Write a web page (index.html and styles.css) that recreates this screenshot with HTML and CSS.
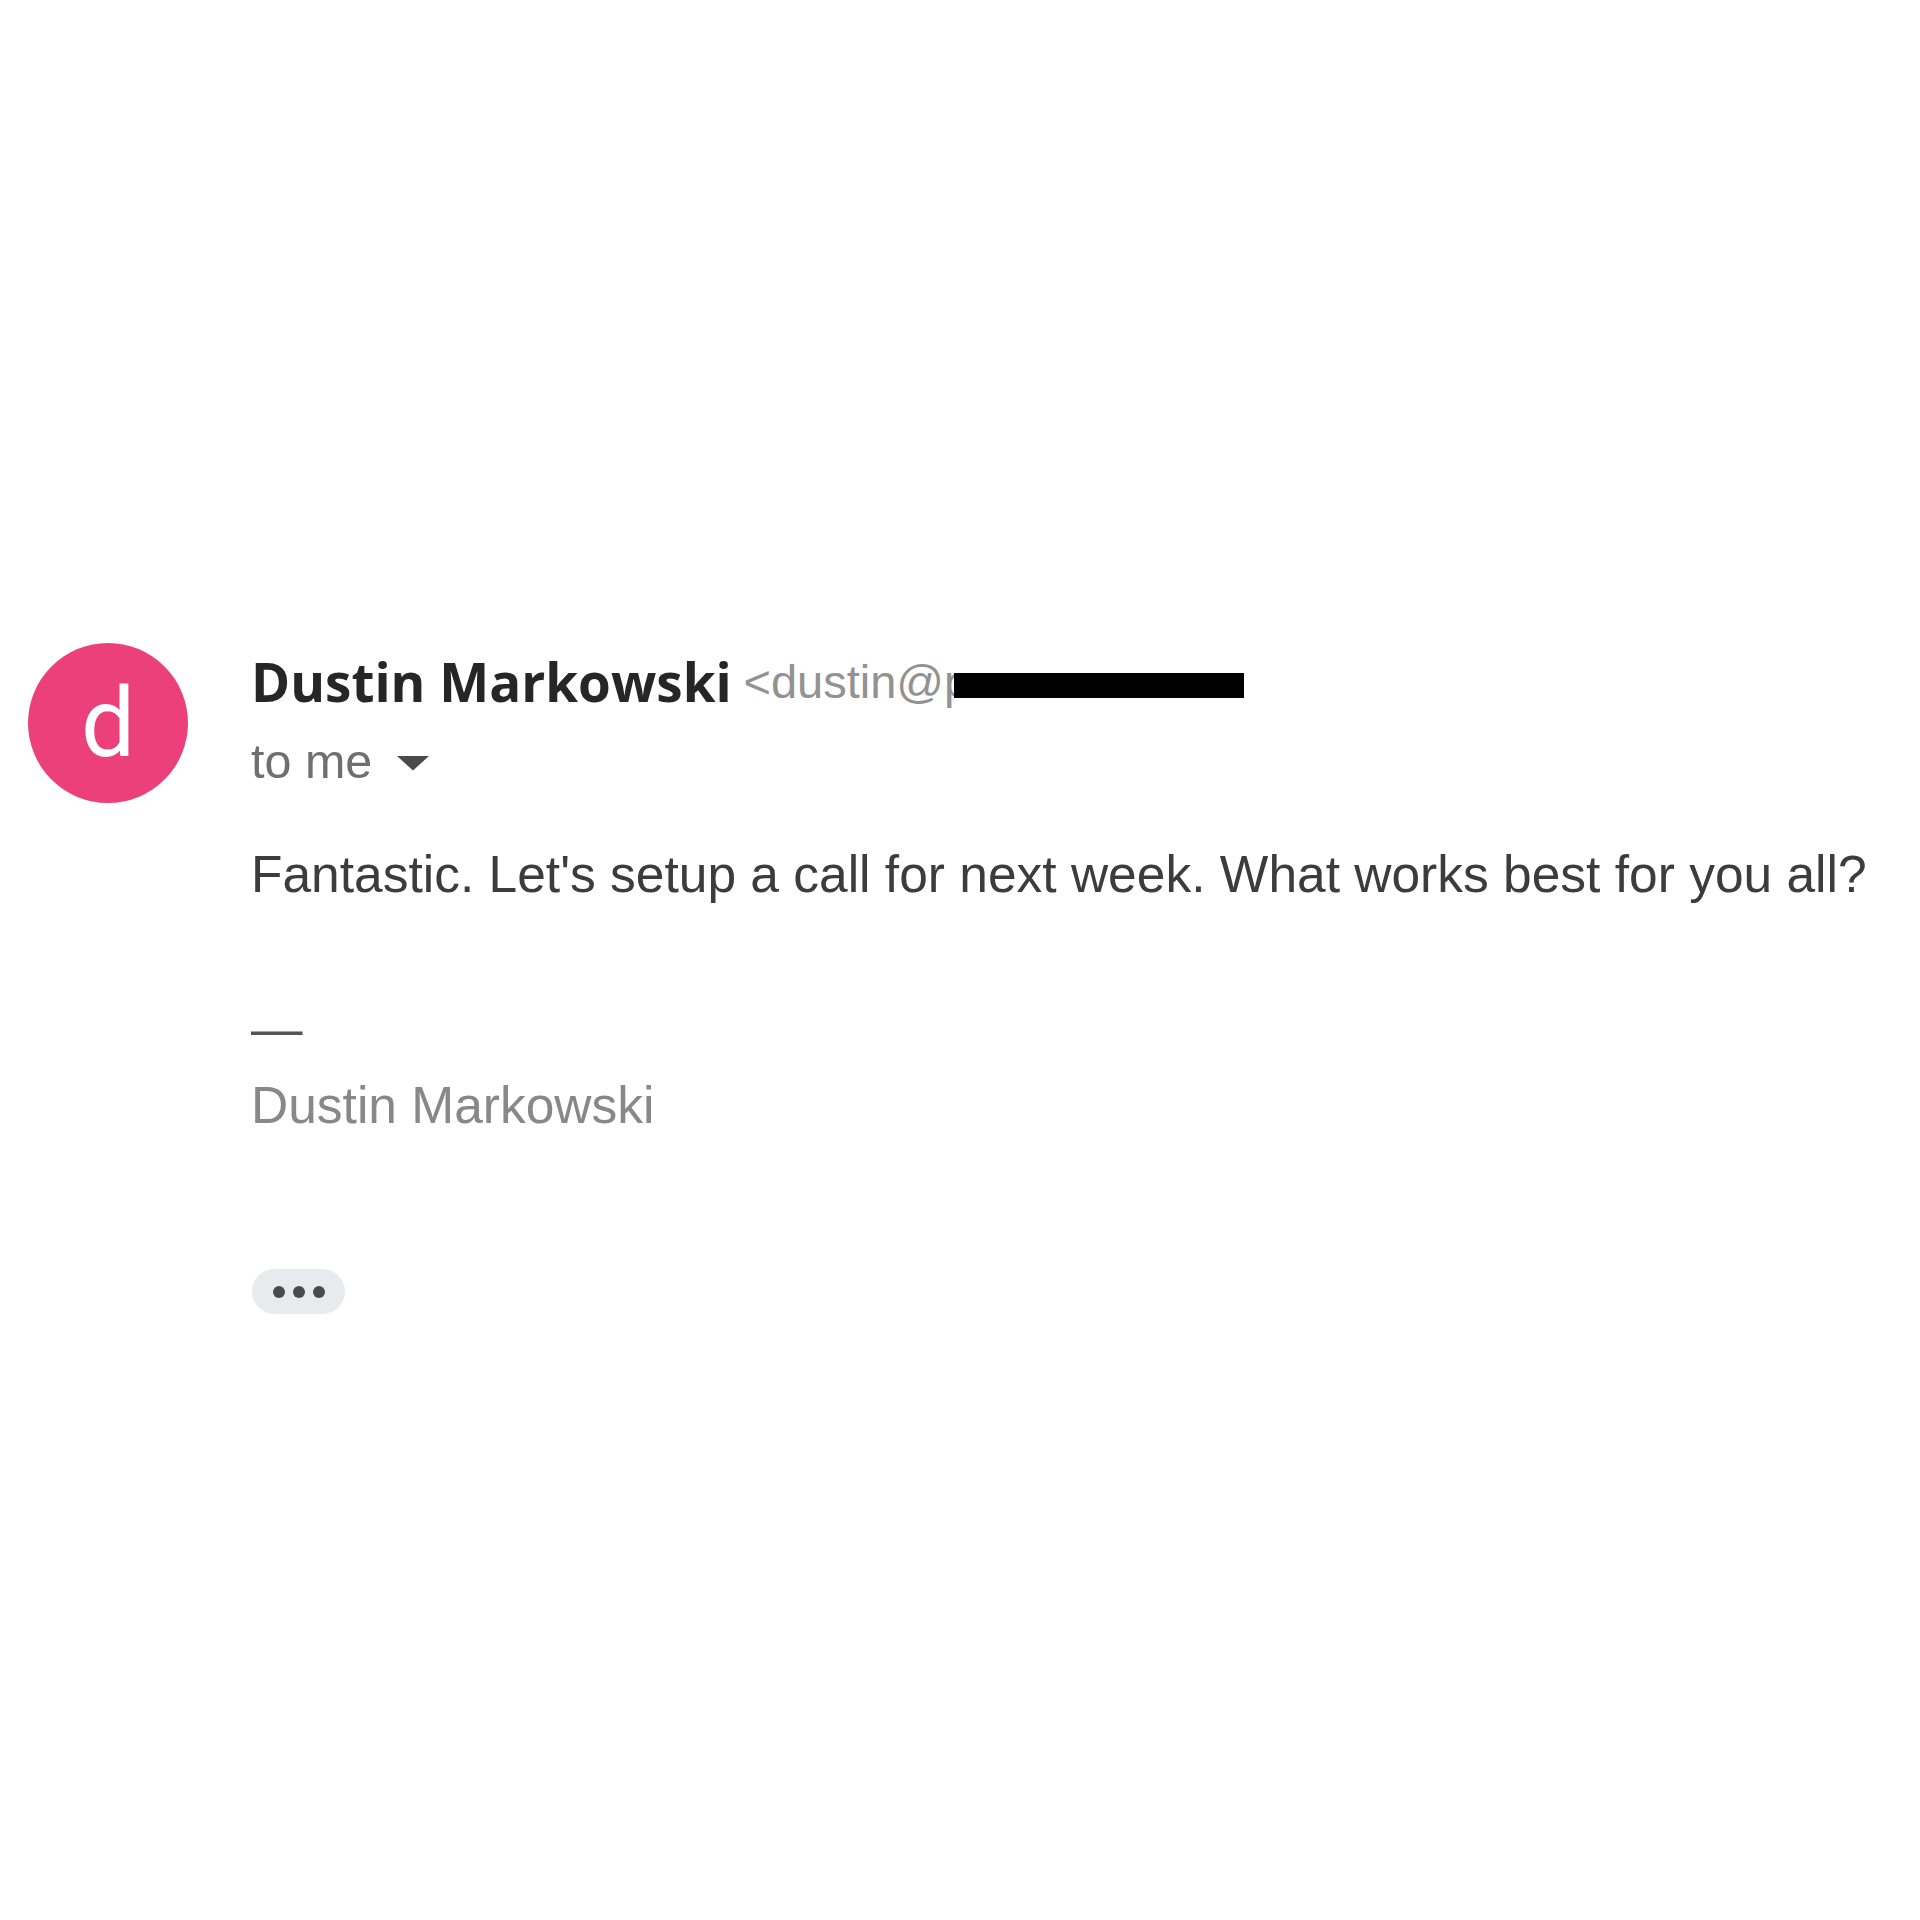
FILE: index.html
```html
<!DOCTYPE html>
<html lang="en">
<head>
<meta charset="utf-8">
<title>Message</title>
<link rel="stylesheet" href="styles.css">
</head>
<body>
<div class="message">
  <div class="avatar">d</div>
  <div class="content">
    <div class="sender-line">
      <span class="sender-name">Dustin Markowski</span>
      <span class="sender-email">&lt;dustin@p<span class="redact"></span></span>
    </div>
    <div class="recipient-line">
      <span class="recipient">to me</span>
      <svg class="caret" width="34" height="16" viewBox="0 0 34 16" aria-hidden="true"><path d="M1 1 H33 L17 15.5 Z" fill="#4a4a4a"/></svg>
    </div>
    <div class="body-text">
      <div>Fantastic. Let's setup a call for next week. What works best for you all?</div>
      <div><br></div>
      <div class="sig-dash">—</div>
      <div class="signature">Dustin Markowski</div>
    </div>
    <div class="more-btn"><span class="dot"></span><span class="dot"></span><span class="dot"></span></div>
  </div>
</div>
</body>
</html>
```

FILE: styles.css
```css
html, body {
  margin: 0;
  padding: 0;
  background: #ffffff;
}

.message {
  display: flex;
  align-items: flex-start;
  padding: 643px 0 0 28px;
}

.avatar {
  flex-shrink: 0;
  width: 160px;
  height: 160px;
  border-radius: 50%;
  background: #ec407a;
  color: #ffffff;
  font-family: Roboto, "Liberation Sans", sans-serif;
  font-weight: 400;
  font-size: 96px;
  line-height: 1;
  display: flex;
  align-items: center;
  justify-content: center;
}

.content {
  margin-left: 63px;
  display: flex;
  flex-direction: column;
  align-items: flex-start;
}

.sender-line {
  font-family: "Open Sans", "Liberation Sans", sans-serif;
  font-weight: 700;
  font-size: 53px;
  line-height: 78px;
  color: #262626;
  white-space: nowrap;
}

.sender-email {
  font-family: "Liberation Sans", Arial, sans-serif;
  font-weight: 400;
  font-size: 47px;
  color: #929292;
  vertical-align: 4px;
  margin-left: -2px;
}

.redact {
  display: inline-block;
  width: 290px;
  height: 25px;
  margin-left: -16px;
  background: #000000;
  vertical-align: baseline;
}

.recipient-line {
  font-family: "Liberation Sans", Arial, sans-serif;
  font-size: 48.5px;
  line-height: 80px;
  color: #6f6f6f;
  white-space: nowrap;
}

.caret {
  display: inline-block;
  margin-left: 10px;
  vertical-align: 7px;
}

.body-text {
  margin-top: 35px;
  font-family: "Liberation Sans", Arial, sans-serif;
  font-size: 51.5px;
  line-height: 77px;
  color: #3c3c3c;
  white-space: nowrap;
}

.sig-dash {
  color: #555555;
}

.signature {
  color: #888888;
}

.more-btn {
  margin-top: 125px;
  margin-left: 1px;
  width: 93px;
  height: 45px;
  border-radius: 23px;
  background: #e8eaed;
  display: flex;
  align-items: center;
  justify-content: center;
  gap: 8px;
}

.dot {
  width: 12px;
  height: 12px;
  border-radius: 50%;
  background: #4a4a4a;
}
```
